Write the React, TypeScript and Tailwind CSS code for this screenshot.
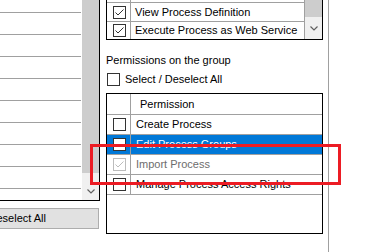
import React from "react";

function Check({ checked = false, disabled = false }: { checked?: boolean; disabled?: boolean }) {
  return (
    <span
      className={`flex h-[13px] w-[13px] shrink-0 items-center justify-center border bg-white ${
        disabled ? "border-[#bcbcbc]" : "border-[#333333]"
      }`}
    >
      {checked && (
        <svg width="11" height="11" viewBox="0 0 11 11">
          <polyline points="1.5,5.5 4,8 9.5,2.5" fill="none" stroke={disabled ? "#bcbcbc" : "#333333"} strokeWidth="1" />
        </svg>
      )}
    </span>
  );
}

function Chevron() {
  return (
    <svg width="8" height="5" viewBox="0 0 8 5">
      <polyline points="0.5,0.5 4,4 7.5,0.5" fill="none" stroke="#606060" strokeWidth="1.2" />
    </svg>
  );
}

const groupRows = [
  { name: "Create Process" },
  { name: "Edit Process Groups", selected: true },
  { name: "Import Process", checked: true, disabled: true },
  { name: "Manage Process Access Rights" },
];

export default function App() {
  return (
    <div className="relative flex h-[252px] w-[381px] overflow-hidden bg-white font-['Liberation_Sans',Arial,sans-serif] text-[11px] leading-[13px] text-black">
      {/* left list + button */}
      <div className="flex w-[100px] shrink-0 flex-col">
        <div className="flex h-[201px] border-r border-b border-black">
          <div className="w-[81px] overflow-hidden">
            <div className="mt-[-9px]">
              {Array.from({ length: 9 }).map((_, i) => (
                <div key={i} className="h-[22px] border-b border-[#a0a0a0]" />
              ))}
            </div>
          </div>
          <div className="ml-[1px] flex w-[17px] flex-col bg-[#f0f0f0]">
            <div className="h-[173px] bg-[#cdcdcd]" />
            <div className="flex-1" />
            <div className="flex h-[17px] items-center justify-center">
              <Chevron />
            </div>
          </div>
        </div>
        <div className="mt-[7px] ml-[-100px] flex h-[21px] w-[199px] shrink-0 items-center justify-end border border-[#adadad] bg-[#e1e1e1] pr-[52px] whitespace-nowrap">
          Select / Deselect All
        </div>
      </div>

      {/* middle: permissions */}
      <div className="flex w-[228px] shrink-0 flex-col pl-[6px] pr-[5px]">
        <div className="flex h-[40px] border-r border-b border-l border-black">
          <div className="flex-1 border-r border-[#a0a0a0]">
            <div className="flex h-[3px] border-b border-[#a0a0a0]">
              <div className="w-[24px] border-r border-[#a0a0a0]" />
            </div>
            <div className="flex h-[19px] border-b border-[#a0a0a0]">
              <div className="flex w-[24px] items-center border-r border-[#a0a0a0] pl-[6px]">
                <Check checked />
              </div>
              <div className="flex items-center pl-[4px] whitespace-nowrap">View Process Definition</div>
            </div>
            <div className="flex h-[17px]">
              <div className="flex w-[24px] items-center border-r border-[#a0a0a0] pl-[6px]">
                <Check checked />
              </div>
              <div className="flex items-center pl-[4px] whitespace-nowrap">Execute Process as Web Service</div>
            </div>
          </div>
          <div className="flex w-[17px] flex-col bg-[#f0f0f0]">
            <div className="h-[17px] bg-[#cdcdcd]" />
            <div className="flex flex-1 items-center justify-center pt-[1px]">
              <Chevron />
            </div>
          </div>
        </div>

        <div className="mt-[14px] whitespace-nowrap">Permissions on the group</div>

        <div className="mt-[6px] flex h-[13px] items-center">
          <span className="ml-[1px]">
            <Check />
          </span>
          <span className="ml-[5px] whitespace-nowrap">Select / Deselect All</span>
        </div>

        <div className="mt-[7px] h-[141px] border border-black">
          <div className="flex h-[21px] border-b border-[#a0a0a0]">
            <div className="w-[24px] border-r border-[#a0a0a0]" />
            <div className="flex items-center pl-[9px]">Permission</div>
          </div>
          {groupRows.map((r) => (
            <div
              key={r.name}
              className={`flex h-[20px] border-b border-[#a0a0a0] ${r.selected ? "bg-[#0078d7] text-white" : ""} ${
                r.disabled ? "text-[#6d6d6d]" : ""
              }`}
            >
              <div className="flex w-[24px] items-center border-r border-[#a0a0a0] pl-[6px]">
                <Check checked={r.checked} disabled={r.disabled} />
              </div>
              <div className="flex items-center pl-[5px] whitespace-nowrap">{r.name}</div>
            </div>
          ))}
        </div>
      </div>

      <div className="flex-1 border-l border-[#a0a0a0]" />

      {/* annotation */}
      <div className="absolute top-[144px] left-[90px] h-[41px] w-[251px] border-[3px] border-[#ec1c24]" />
    </div>
  );
}
